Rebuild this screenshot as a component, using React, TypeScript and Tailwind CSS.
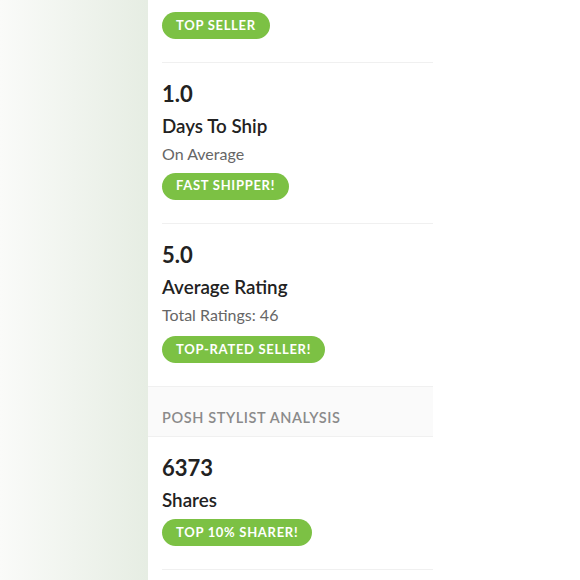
import React from "react";

function Badge({ children }: { children: React.ReactNode }) {
  return (
    <span className="inline-flex h-[27px] items-center rounded-full bg-[#7cc144] px-[14px] text-[13px] font-bold tracking-[0.7px] text-white">
      {children}
    </span>
  );
}

function Stat({
  value,
  label,
  sub,
  badge,
  badgeTop,
  border = true,
}: {
  value: string;
  label: string;
  sub?: string;
  badge: string;
  badgeTop: string;
  border?: boolean;
}) {
  return (
    <div className={`ml-[14px] pt-[16px] pb-[23px] ${border ? "border-b border-[#f0f0f0]" : ""}`}>
      <div className="text-[22px] font-bold leading-[30px] text-[#222]">{value}</div>
      <div className="mt-[2px] text-[18.8px] font-semibold leading-[30px] text-[#222]">{label}</div>
      {sub && <div className="text-[16px] leading-[26px] text-[#666]">{sub}</div>}
      <div className={badgeTop}>
        <Badge>{badge}</Badge>
      </div>
    </div>
  );
}

export default function App() {
  return (
    <div
      className="flex h-[580px] w-[580px] overflow-hidden bg-white"
      style={{ fontFamily: "Lato, 'Open Sans', sans-serif" }}
    >
      <div className="h-full w-[148px] bg-gradient-to-r from-[#fafbf9] to-[#e6ede3]" />
      <div className="h-full w-[285px] bg-white">
        <div className="ml-[14px] border-b border-[#f0f0f0] pt-[12px] pb-[23px]">
          <Badge>TOP SELLER</Badge>
        </div>
        <Stat value="1.0" label="Days To Ship" sub="On Average" badge="FAST SHIPPER!" badgeTop="mt-[5px]" />
        <Stat
          value="5.0"
          label="Average Rating"
          sub="Total Ratings: 46"
          badge="TOP-RATED SELLER!"
          badgeTop="mt-[8px]"
          border={false}
        />
        <div className="h-[51px] border-y border-[#f0f0f0] bg-[#fafafa] pt-[20px] pl-[14px] text-[14.5px] font-semibold leading-[21px] tracking-[0.6px] text-[#8a8a8a]">
          POSH STYLIST ANALYSIS
        </div>
        <div className="ml-[14px] border-b border-[#f0f0f0] pt-[16px] pb-[23px]">
          <div className="text-[22px] font-bold leading-[30px] text-[#222]">6373</div>
          <div className="mt-[2px] text-[18.8px] font-semibold leading-[30px] text-[#222]">Shares</div>
          <div className="mt-[4px]">
            <Badge>TOP 10% SHARER!</Badge>
          </div>
        </div>
      </div>
      <div className="h-full flex-1 bg-white" />
    </div>
  );
}
